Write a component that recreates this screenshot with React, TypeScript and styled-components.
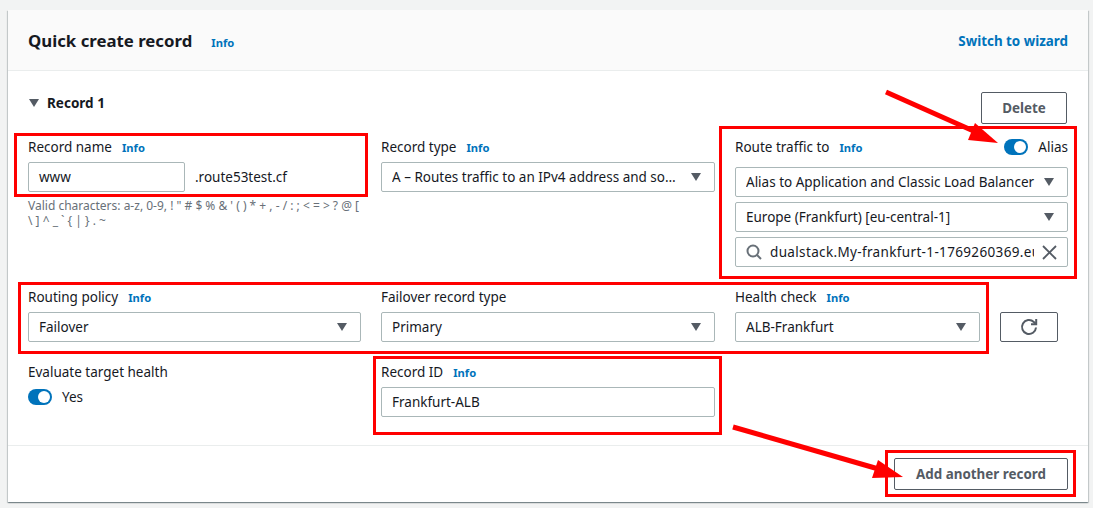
import { ReactNode } from "react";
import styled, { createGlobalStyle } from "styled-components";

const GlobalStyle = createGlobalStyle`
  html, body {
    margin: 0;
    padding: 0;
    background: #f2f3f3;
    font-family: "Noto Sans", "Open Sans", sans-serif;
    font-size: 13.5px;
    color: #16191f;
  }
`;

const highlights = [
  { x: 14, y: 133, w: 354, h: 64 },
  { x: 719, y: 126, w: 358, h: 153 },
  { x: 18, y: 282, w: 971, h: 72 },
  { x: 373, y: 356, w: 349, h: 79 },
  { x: 885, y: 450, w: 191, h: 47 },
];

const Caret = () => (
  <CaretIcon viewBox="0 0 10 8">
    <polygon points="0,0 10,0 5,8" fill="#545b64" />
  </CaretIcon>
);

const Label = ({ text, info }: { text: string; info?: boolean }) => (
  <LabelRow>
    <span>{text}</span>
    {info && <InfoLink>Info</InfoLink>}
  </LabelRow>
);

const Select = ({ children }: { children: ReactNode }) => (
  <SelectBox>
    <BoxText>{children}</BoxText>
    <Caret />
  </SelectBox>
);

const Toggle = () => (
  <ToggleTrack>
    <ToggleKnob />
  </ToggleTrack>
);

const App = () => {
  return (
    <>
      <GlobalStyle />
      <Page>
        <Panel>
          <Header>
            <TitleGroup>
              <Title>Quick create record</Title>
              <TitleInfo>Info</TitleInfo>
            </TitleGroup>
            <HeaderLink>Switch to wizard</HeaderLink>
          </Header>

          <Body>
            <RecordRow>
              <RecordTitle>
                <Caret />
                <span>Record 1</span>
              </RecordTitle>
              <DeleteButton>Delete</DeleteButton>
            </RecordRow>

            <FormGrid>
              <Field>
                <Label text="Record name" info />
                <NameRow>
                  <NameInput>www</NameInput>
                  <span>.route53test.cf</span>
                </NameRow>
                <Hint>
                  Valid characters: a-z, 0-9, ! " # $ % &amp; ' ( ) * + , - / : ; &lt; = &gt; ? @ [
                  <br />
                  \ ] ^ _ ` {"{"} | {"}"} . ~
                </Hint>
              </Field>

              <Field>
                <Label text="Record type" info />
                <Select>A – Routes traffic to an IPv4 address and some AWS resources</Select>
              </Field>

              <Field>
                <RouteLabelRow>
                  <Label text="Route traffic to" info />
                  <ToggleGroup>
                    <Toggle />
                    <span>Alias</span>
                  </ToggleGroup>
                </RouteLabelRow>
                <Select>Alias to Application and Classic Load Balancer</Select>
                <Select>Europe (Frankfurt) [eu-central-1]</Select>
                <SearchBox>
                  <svg width="16" height="16" viewBox="0 0 16 16" fill="none" stroke="#687078" strokeWidth="2">
                    <circle cx="7" cy="7" r="5.5" />
                    <line x1="11" y1="11" x2="15" y2="15" />
                  </svg>
                  <SearchText>dualstack.My-frankfurt-1-1769260369.eu-central-1.elb.amazonaws.com</SearchText>
                  <svg width="15" height="15" viewBox="0 0 15 15" fill="none" stroke="#545b64" strokeWidth="1.8">
                    <line x1="1" y1="1" x2="14" y2="14" />
                    <line x1="14" y1="1" x2="1" y2="14" />
                  </svg>
                </SearchBox>
              </Field>

              <Field>
                <Label text="Routing policy" info />
                <Select>Failover</Select>
              </Field>

              <Field>
                <Label text="Failover record type" />
                <Select>Primary</Select>
              </Field>

              <HealthField>
                <HealthSelect>
                  <Label text="Health check" info />
                  <Select>ALB-Frankfurt</Select>
                </HealthSelect>
                <RefreshButton aria-label="Refresh">
                  <svg width="18" height="18" viewBox="0 0 18 18" fill="none" stroke="#545b64" strokeWidth="2">
                    <path d="M16 9.5a7 7 0 1 1-2.2-5.6L16 6" />
                    <path d="M16.2 1v5.2H11" />
                  </svg>
                </RefreshButton>
              </HealthField>

              <Field>
                <Label text="Evaluate target health" />
                <ToggleRow>
                  <Toggle />
                  <span>Yes</span>
                </ToggleRow>
              </Field>

              <Field>
                <Label text="Record ID" info />
                <TextBox>Frankfurt-ALB</TextBox>
              </Field>
            </FormGrid>
          </Body>

          <Footer>
            <AddButton>Add another record</AddButton>
          </Footer>
        </Panel>

        {highlights.map((h, i) => (
          <Highlight key={i} $x={h.x} $y={h.y} $w={h.w} $h={h.h} />
        ))}

        <ArrowLayer width="1093" height="508" viewBox="0 0 1093 508">
          <line x1="886" y1="92" x2="978" y2="133" stroke="#ff0000" strokeWidth="5" />
          <polygon points="998,143 968,140 975,123" fill="#ff0000" />
          <line x1="733" y1="427" x2="882" y2="470" stroke="#ff0000" strokeWidth="5" />
          <polygon points="903,477 872,478 878,460" fill="#ff0000" />
        </ArrowLayer>
      </Page>
    </>
  );
};

export default App;

const Page = styled.div`
  position: relative;
  box-sizing: border-box;
  width: 1093px;
  height: 508px;
  padding: 10px 5px 6px 8px;
  overflow: hidden;
`;

const Panel = styled.div`
  display: flex;
  flex-direction: column;
  height: 492px;
  background: #fff;
  box-shadow: 0 1px 1px 0 rgba(0, 28, 36, 0.3), 1px 1px 1px 0 rgba(0, 28, 36, 0.15),
    -1px 1px 1px 0 rgba(0, 28, 36, 0.15);
`;

const Header = styled.div`
  display: flex;
  align-items: center;
  justify-content: space-between;
  box-sizing: border-box;
  height: 61px;
  padding: 2px 20px 0;
  background: #fafafa;
  border-bottom: 1px solid #eaeded;
`;

const TitleGroup = styled.div`
  display: flex;
  align-items: center;
  gap: 19px;
`;

const Title = styled.h2`
  margin: 0;
  font-size: 16.8px;
  font-weight: 700;
  line-height: 22px;
`;

const InfoLink = styled.span`
  color: #0073bb;
  font-size: 11.2px;
  font-weight: 700;
  line-height: 16px;
  margin-top: 2px;
`;

const TitleInfo = styled(InfoLink)`
  margin-top: 4px;
`;

const HeaderLink = styled.span`
  color: #0073bb;
  font-size: 13.4px;
  font-weight: 700;
`;

const Body = styled.div`
  flex: 1;
  padding: 21px 20px 0;
`;

const RecordRow = styled.div`
  display: flex;
  align-items: flex-start;
  justify-content: space-between;
  height: 32px;
  padding-right: 1px;
  margin-bottom: 13px;
`;

const RecordTitle = styled.div`
  display: flex;
  align-items: center;
  gap: 8px;
  height: 21px;
  padding-left: 1px;
  font-weight: 700;
`;

const DeleteButton = styled.button`
  box-sizing: border-box;
  width: 86px;
  height: 32px;
  padding: 0;
  background: #fff;
  border: 1px solid #545b64;
  border-radius: 2px;
  color: #545b64;
  font: 700 13.4px "Noto Sans", sans-serif;
`;

const FormGrid = styled.div`
  display: grid;
  grid-template-columns: 333px 334px 333px;
  grid-template-rows: 130px 55px 55px;
  column-gap: 20px;
  row-gap: 20px;
`;

const Field = styled.div`
  display: flex;
  flex-direction: column;
  gap: 5px;
  min-width: 0;
`;

const LabelRow = styled.div`
  display: flex;
  align-items: center;
  gap: 10px;
  height: 20px;
`;

const RouteLabelRow = styled.div`
  display: flex;
  align-items: center;
  justify-content: space-between;
  margin-bottom: 5px;
`;

const ToggleGroup = styled.div`
  display: flex;
  align-items: center;
  gap: 10px;
`;

const ToggleRow = styled(ToggleGroup)`
  height: 20px;
`;

const ToggleTrack = styled.span`
  position: relative;
  display: block;
  width: 24px;
  height: 16px;
  border-radius: 8px;
  background: #0073bb;
`;

const ToggleKnob = styled.span`
  position: absolute;
  top: 2px;
  right: 2px;
  width: 12px;
  height: 12px;
  border-radius: 50%;
  background: #fff;
`;

const TextBox = styled.div`
  display: flex;
  align-items: center;
  box-sizing: border-box;
  height: 30px;
  padding: 0 10px;
  background: #fff;
  border: 1px solid #aab7b8;
  border-radius: 2px;
`;

const NameRow = styled.div`
  display: flex;
  align-items: center;
  gap: 10px;
`;

const NameInput = styled(TextBox)`
  width: 157px;
`;

const Hint = styled.div`
  padding-top: 1px;
  color: #687078;
  font-size: 12px;
  line-height: 15px;
  white-space: nowrap;
`;

const SelectBox = styled(TextBox)`
  justify-content: space-between;
  gap: 9px;
  padding-right: 13px;
`;

const BoxText = styled.span`
  flex: 1;
  min-width: 0;
  overflow: hidden;
  text-overflow: ellipsis;
  white-space: nowrap;
`;

const CaretIcon = styled.svg`
  flex: none;
  width: 10px;
  height: 8px;
`;

const SearchBox = styled(TextBox)`
  gap: 8px;
`;

const SearchText = styled.span`
  flex: 1;
  min-width: 0;
  overflow: hidden;
  white-space: nowrap;
  letter-spacing: 0.35px;
`;

const HealthField = styled.div`
  display: flex;
  align-items: flex-end;
  gap: 20px;
`;

const HealthSelect = styled(Field)`
  width: 245px;
`;

const RefreshButton = styled.button`
  display: flex;
  align-items: center;
  justify-content: center;
  box-sizing: border-box;
  width: 58px;
  height: 30px;
  padding: 0;
  background: #fff;
  border: 1px solid #545b64;
  border-radius: 2px;
`;

const Footer = styled.div`
  display: flex;
  justify-content: flex-end;
  box-sizing: border-box;
  height: 57px;
  padding: 12px 20px;
  border-top: 1px solid #eaeded;
`;

const AddButton = styled.button`
  box-sizing: border-box;
  width: 174px;
  height: 32px;
  padding: 0;
  background: #fff;
  border: 1px solid #545b64;
  border-radius: 2px;
  color: #545b64;
  font: 700 13.4px "Noto Sans", sans-serif;
`;

const Highlight = styled.div<{ $x: number; $y: number; $w: number; $h: number }>`
  position: absolute;
  left: ${(p) => p.$x}px;
  top: ${(p) => p.$y}px;
  box-sizing: border-box;
  width: ${(p) => p.$w}px;
  height: ${(p) => p.$h}px;
  border: 3px solid #ff0000;
  pointer-events: none;
`;

const ArrowLayer = styled.svg`
  position: absolute;
  left: 0;
  top: 0;
  pointer-events: none;
`;
